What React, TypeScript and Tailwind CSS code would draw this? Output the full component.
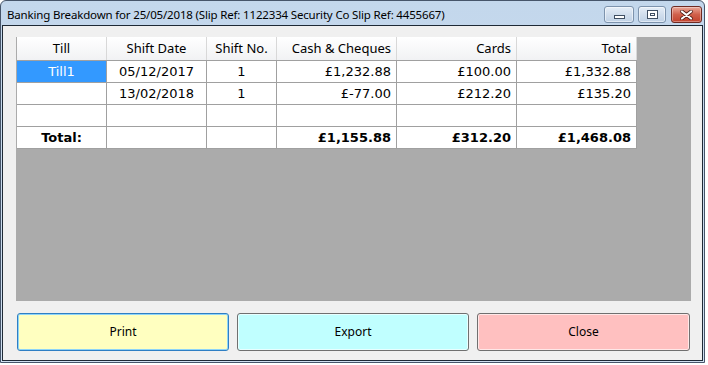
import React from 'react';

type Row = {
  till: string;
  date: string;
  shift: string;
  cash: string;
  cards: string;
  total: string;
  selected?: boolean;
  bold?: boolean;
};

const rows: Row[] = [
  { till: 'Till1', date: '05/12/2017', shift: '1', cash: '£1,232.88', cards: '£100.00', total: '£1,332.88', selected: true },
  { till: '', date: '13/02/2018', shift: '1', cash: '£-77.00', cards: '£212.20', total: '£135.20' },
  { till: '', date: '', shift: '', cash: '', cards: '', total: '' },
  { till: 'Total:', date: '', shift: '', cash: '£1,155.88', cards: '£312.20', total: '£1,468.08', bold: true },
];

const uiFont = { fontFamily: '"Noto Sans", "Open Sans", sans-serif' };
const cellFont = { fontFamily: '"DejaVu Sans", Verdana, sans-serif' };

const TitleButton = ({ kind }: { kind: 'min' | 'max' | 'close' }) => {
  if (kind === 'close') {
    return (
      <div className="w-[31px] h-[17px] rounded-[3px] border border-[#6f2a22] bg-gradient-to-b from-[#e9a799] via-[#d0604b] to-[#c2412c] flex items-center justify-center shadow-[inset_0_0_0_1px_rgba(255,255,255,0.35)]">
        <svg width="13" height="10" viewBox="0 0 13 10">
          <path d="M2 1.5 L11 8.5 M11 1.5 L2 8.5" stroke="#4a1a14" strokeWidth="3.6" strokeLinecap="round" />
          <path d="M2 1.5 L11 8.5 M11 1.5 L2 8.5" stroke="#ffffff" strokeWidth="2.2" strokeLinecap="round" />
        </svg>
      </div>
    );
  }
  return (
    <div className={`${kind === 'min' ? 'w-[30px]' : 'w-[28px]'} h-[17px] rounded-[3px] border border-[#7d93ad] bg-gradient-to-b from-[#e6eef8] via-[#d1deed] to-[#c0d2e6] flex items-center justify-center shadow-[inset_0_0_0_1px_rgba(255,255,255,0.5)]`}>
      {kind === 'min' ? (
        <div className="w-[11px] h-[4px] mt-[5px] border border-[#3f4f63] bg-white" />
      ) : (
        <div className="w-[11px] h-[9px] border border-[#3f4f63] bg-white flex items-center justify-center">
          <div className="w-[5px] h-[3px] border border-[#3f4f63]" />
        </div>
      )}
    </div>
  );
};

const cols = 'grid grid-cols-[90px_100px_70px_120px_120px_120px]';

export default function App() {
  return (
    <div className="w-[708px] h-[365px] bg-white">
      <div className="w-[705px] h-[363px] border border-[#46556a] rounded-t-[6px] bg-gradient-to-b from-[#c3d7ec] to-[#cfdff0] flex flex-col">
        {/* title bar */}
        <div className="h-[24px] flex items-start justify-between pl-[6px] pr-[2px]">
          <div className="text-[11.5px] tracking-[-0.17px] text-black pt-[5px] whitespace-nowrap" style={uiFont}>
            Banking Breakdown for 25/05/2018 (Slip Ref: 1122334 Security Co Slip Ref: 4455667)
          </div>
          <div className="flex items-center gap-[4px] pt-[5px]">
            <TitleButton kind="min" />
            <TitleButton kind="max" />
            <div className="ml-[1px]">
              <TitleButton kind="close" />
            </div>
          </div>
        </div>

        {/* client area */}
        <div className="flex-1 mx-[1px] mb-[1px] border border-[#1f2a36] bg-[#f0f0f0] pt-[11px] flex flex-col">
          <div className="ml-[13px] w-[675px] h-[264px] bg-[#ababab] pl-[1px]">
            <div className="w-[620px] bg-white">
              <div className={`${cols} h-[24px] bg-gradient-to-b from-white to-[#f1f2f4] border-b border-[#a0a0a0] text-[13px] text-black`} style={uiFont}>
                <div className="flex items-center justify-center border-r border-[#d8d8d8]">Till</div>
                <div className="flex items-center justify-center border-r border-[#d8d8d8]">Shift Date</div>
                <div className="flex items-center justify-center border-r border-[#d8d8d8]">Shift No.</div>
                <div className="flex items-center justify-end pr-[5px] border-r border-[#d8d8d8]">Cash &amp; Cheques</div>
                <div className="flex items-center justify-end pr-[5px] border-r border-[#d8d8d8]">Cards</div>
                <div className="flex items-center justify-end pr-[5px] border-r border-[#d8d8d8]">Total</div>
              </div>
              {rows.map((r, i) => (
                <div
                  key={i}
                  className={`${cols} h-[22px] border-b border-[#a0a0a0] text-[13px] text-black ${r.bold ? 'font-bold' : ''}`}
                  style={cellFont}
                >
                  <div
                    className={`flex items-center justify-center border-r border-[#a0a0a0] ${r.selected ? 'bg-[#3399ff] text-white' : ''}`}
                  >
                    {r.till}
                  </div>
                  <div className="flex items-center justify-center border-r border-[#a0a0a0]">{r.date}</div>
                  <div className="flex items-center justify-center border-r border-[#a0a0a0]">{r.shift}</div>
                  <div className="flex items-center justify-end pr-[5px] border-r border-[#a0a0a0]">{r.cash}</div>
                  <div className="flex items-center justify-end pr-[5px] border-r border-[#a0a0a0]">{r.cards}</div>
                  <div className="flex items-center justify-end pr-[5px] border-r border-[#a0a0a0]">{r.total}</div>
                </div>
              ))}
            </div>
          </div>

          {/* buttons */}
          <div className="flex gap-[8px] ml-[14px] mt-[12px] text-[12px] text-black" style={uiFont}>
            <button className="w-[212px] h-[38px] rounded-[3px] border border-[#2f7fc4] bg-[#ffffc0] shadow-[inset_0_0_0_1px_#8ed4f8]">
              Print
            </button>
            <button className="w-[232px] h-[38px] rounded-[3px] border border-[#707070] bg-[#c0ffff] shadow-[inset_0_0_0_1px_#e8ffff]">
              Export
            </button>
            <button className="w-[213px] h-[38px] rounded-[3px] border border-[#707070] bg-[#ffc0c0] shadow-[inset_0_0_0_1px_#ffe8e8]">
              Close
            </button>
          </div>
        </div>
      </div>
    </div>
  );
}
